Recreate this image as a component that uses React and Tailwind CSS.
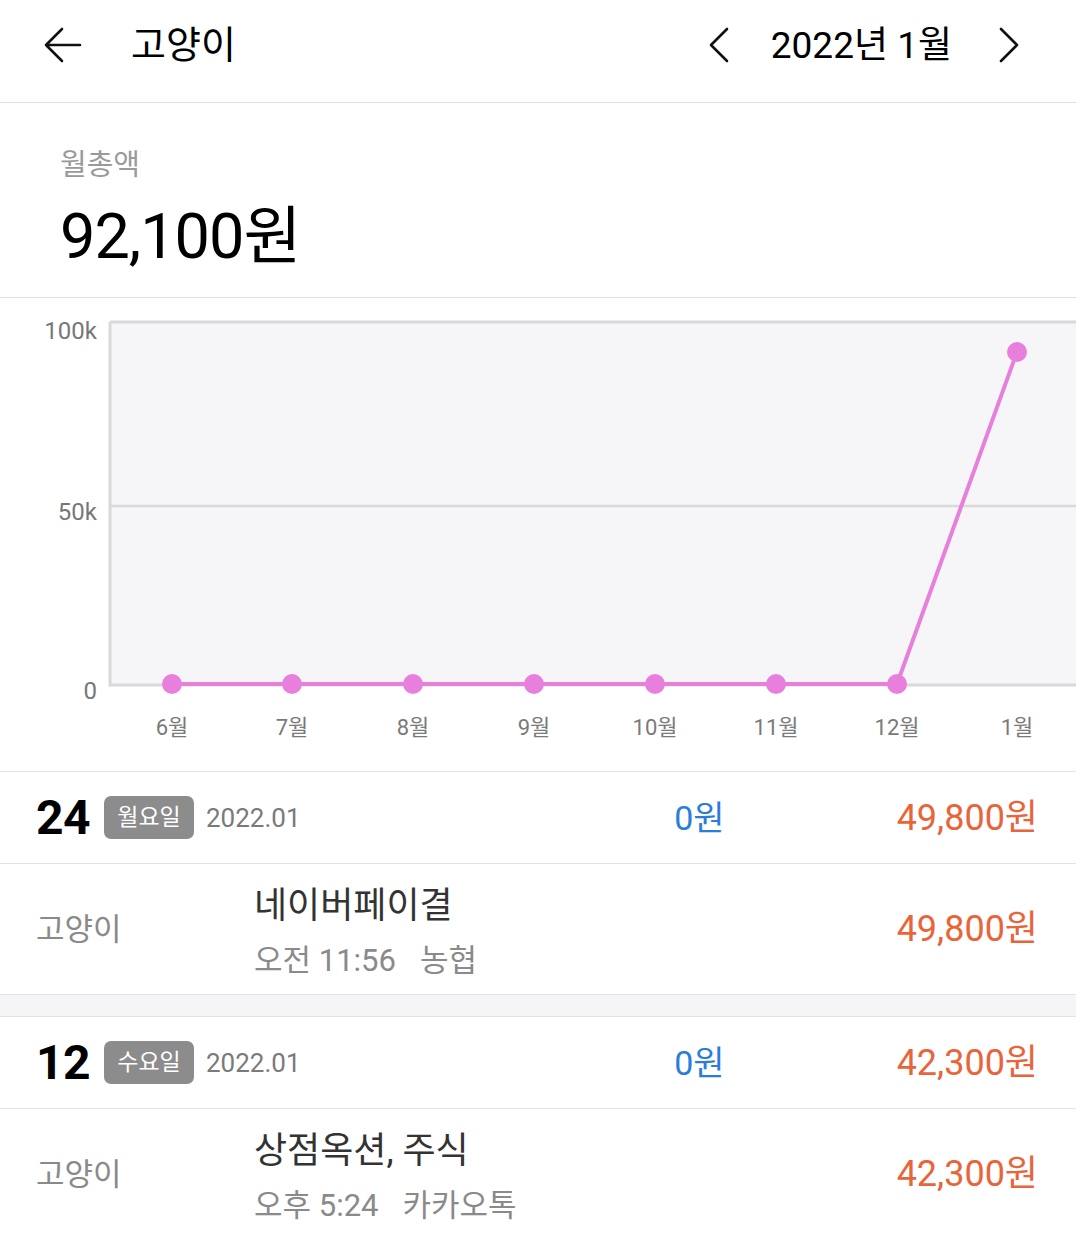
import React from "react";

const FONT = { fontFamily: "Roboto, 'Noto Sans CJK KR', sans-serif" };

function Chart() {
  const xs = [172, 292, 413, 534, 655, 776, 897, 1017];
  const labels = ["6월", "7월", "8월", "9월", "10월", "11월", "12월", "1월"];
  const top = 24;
  const bottom = 387;
  const ys = [386, 386, 386, 386, 386, 386, 386, 54];
  const pts = xs.map((x, i) => `${x},${ys[i]}`).join(" ");
  return (
    <svg width="1076" height="472" viewBox="0 0 1076 472" className="block">
      <rect x="110" y={top} width="980" height={bottom - top} fill="#f6f6f9" />
      <line x1="110" y1={top} x2="1076" y2={top} stroke="#d9d9d9" strokeWidth="3" />
      <line x1="110" y1={208} x2="1076" y2={208} stroke="#d9d9d9" strokeWidth="2.5" />
      <line x1="110" y1={bottom} x2="1076" y2={bottom} stroke="#d9d9d9" strokeWidth="3" />
      <line x1="110" y1={top} x2="110" y2={bottom + 1.5} stroke="#d9d9d9" strokeWidth="3" />
      <g fill="#777" fontSize="24" style={FONT}>
        <text x="97" y="41" textAnchor="end">100k</text>
        <text x="97" y="222" textAnchor="end">50k</text>
        <text x="97" y="401" textAnchor="end">0</text>
      </g>
      <polyline points={pts} fill="none" stroke="#e680da" strokeWidth="4" strokeLinejoin="round" />
      {xs.map((x, i) => (
        <circle key={i} cx={x} cy={ys[i]} r="10" fill="#e97fdc" />
      ))}
      <g fill="#7a7a7a" fontSize="22" style={FONT}>
        {xs.map((x, i) => (
          <text key={i} x={x} y="437" textAnchor="middle">{labels[i]}</text>
        ))}
      </g>
    </svg>
  );
}

function DayGroup({ day, weekday, amount, title, time, place }) {
  return (
    <div>
      <div className="h-[92px] flex items-center border-b border-[#e3e3e3]">
        <div className="w-[104px] pl-[36px] text-[48px] font-bold text-black leading-none tracking-[-0.5px]">{day}</div>
        <div className="h-[43px] w-[90px] rounded-[7px] bg-[#8c8c8c] text-white text-[23px] flex items-center justify-center leading-none">
          {weekday}
        </div>
        <div className="ml-[12px] text-[26px] text-[#7a7a7a] leading-none">2022.01</div>
        <div className="ml-auto text-right text-[34px] text-[#2b7ddb] leading-none mr-[172px]">0원</div>
        <div className="text-[36px] text-[#e9643a] leading-none mr-[38px]">{amount}</div>
      </div>
      <div className="h-[131px] flex items-center border-b border-[#e3e3e3]">
        <div className="w-[254px] pl-[36px] text-[31px] text-[#8a8a8a] leading-none">고양이</div>
        <div className="flex flex-col gap-[21px] pt-[6px]">
          <div className="text-[36px] text-[#333] leading-none">{title}</div>
          <div className="text-[31px] text-[#8a8a8a] leading-none">
            {time}
            <span className="ml-[24px]">{place}</span>
          </div>
        </div>
        <div className="ml-auto mr-[38px] text-[36px] text-[#e9643a] leading-none">{amount}</div>
      </div>
    </div>
  );
}

export default function App() {
  return (
    <div className="w-[1076px] h-[1236px] bg-white overflow-hidden" style={FONT}>
      <div className="h-[103px] flex items-center pb-[12px] border-b border-[#e0e0e0]">
        <svg width="40" height="40" viewBox="0 0 40 40" className="ml-[43px]" fill="none" stroke="#111" strokeWidth="2.6" strokeLinecap="round" strokeLinejoin="round">
          <path d="M37 20H3M19 4L3 20l16 16" />
        </svg>
        <div className="ml-[48px] text-[38px] text-black leading-none">고양이</div>
        <svg width="24" height="36" viewBox="0 0 24 36" className="ml-auto" fill="none" stroke="#111" strokeWidth="2.6" strokeLinecap="round" strokeLinejoin="round">
          <path d="M20 2L4 18l16 16" />
        </svg>
        <div className="ml-[40px] text-[37px] text-black leading-none">2022년 1월</div>
        <svg width="24" height="36" viewBox="0 0 24 36" className="ml-[45px] mr-[55px]" fill="none" stroke="#111" strokeWidth="2.6" strokeLinecap="round" strokeLinejoin="round">
          <path d="M4 2l16 16L4 34" />
        </svg>
      </div>
      <div className="h-[195px] border-b border-[#e0e0e0] pl-[60px] pt-[48px]">
        <div className="text-[29px] text-[#9a9a9a] leading-none">월총액</div>
        <div className="mt-[25px] text-[63px] text-black leading-none tracking-[-1px]">92,100원</div>
      </div>
      <div className="h-[474px] border-b border-[#e3e3e3]">
        <Chart />
      </div>
      <DayGroup day="24" weekday="월요일" amount="49,800원" title="네이버페이결" time="오전 11:56" place="농협" />
      <div className="h-[22px] bg-[#f5f5f7] border-b border-[#e3e3e3]" />
      <DayGroup day="12" weekday="수요일" amount="42,300원" title="상점옥션, 주식" time="오후 5:24" place="카카오톡" />
    </div>
  );
}
